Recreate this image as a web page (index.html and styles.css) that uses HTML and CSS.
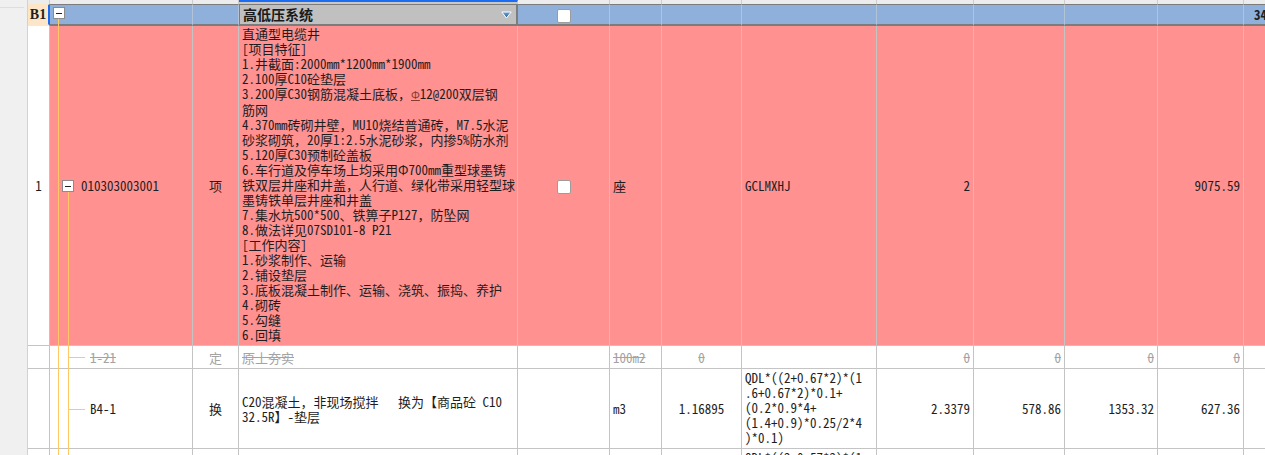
FILE: index.html
```html
<!DOCTYPE html>
<html lang="zh-CN">
<head>
<meta charset="utf-8">
<title>清单</title>
<link rel="stylesheet" href="styles.css">
</head>
<body>
<div class="wrap">
  <div class="gutter"><div class="gutter-head"></div></div>
  <table class="grid">
    <colgroup>
      <col class="c-no"><col class="c-code"><col class="c-type"><col class="c-name"><col class="c-chk"><col class="c-unit"><col class="c-qty"><col class="c-expr"><col class="c-n1"><col class="c-n2"><col class="c-n3"><col class="c-n4"><col class="c-n5">
    </colgroup>
    <tr class="r-head">
      <td></td><td></td><td></td><td class="head-sel"></td><td></td><td></td><td></td><td></td><td></td><td></td><td></td><td></td><td></td>
    </tr>
    <tr class="r-b1">
      <td class="no-b1">B1</td>
      <td class="code code-b1"><span class="box"></span><span class="ta ta-b1"></span></td>
      <td></td>
      <td class="name-b1"><div class="combo"><span>高低压系统</span><svg class="drop" width="11" height="8" viewBox="0 0 11 8"><defs><linearGradient id="g" x1="0" y1="0" x2="0" y2="1"><stop offset="0" stop-color="#6fa6d8"/><stop offset="1" stop-color="#1d5a96"/></linearGradient></defs><polygon points="0.8,1 10.2,1 5.5,7" fill="url(#g)" stroke="#fff" stroke-width="1"/></svg></div></td>
      <td class="chk"><span class="cb"></span></td>
      <td></td><td></td><td></td><td></td><td></td><td></td><td></td>
      <td class="total">34176.52</td>
    </tr>
    <tr class="r-1">
      <td class="no">1</td>
      <td class="code code-1"><span class="ta"></span><span class="tb tb-1"></span><span class="box box-1"></span>010303003001</td>
      <td class="ctr">项</td>
      <td class="desc">直通型电缆井<br>[项目特征]<br>1.井截面:2000mm*1200mm*1900mm<br>2.100厚C10砼垫层<br>3.200厚C30钢筋混凝土底板，<span class="rebar">Φ</span>12@200双层钢<br>筋网<br>4.370mm砖砌井壁，MU10烧结普通砖，M7.5水泥<br>砂浆砌筑，20厚1:2.5水泥砂浆，内掺5%防水剂<br>5.120厚C30预制砼盖板<br>6.车行道及停车场上均采用Φ700mm重型球墨铸<br>铁双层井座和井盖，人行道、绿化带采用轻型球<br>墨铸铁单层井座和井盖<br>7.集水坑500*500、铁箅子P127，防坠网<br>8.做法详见07SD101-8 P21<br>[工作内容]<br>1.砂浆制作、运输<br>2.铺设垫层<br>3.底板混凝土制作、运输、浇筑、振捣、养护<br>4.砌砖<br>5.勾缝<br>6.回填</td>
      <td class="chk"><span class="cb"></span></td>
      <td class="txt">座</td>
      <td class="ctr"></td>
      <td class="txt">GCLMXHJ</td>
      <td class="num">2</td>
      <td class="num"></td>
      <td class="num"></td>
      <td class="num">9075.59</td>
      <td></td>
    </tr>
    <tr class="r-del">
      <td class="no"></td>
      <td class="code code-sub"><span class="ta"></span><span class="tb"></span><span class="th"></span><s>1-21</s></td>
      <td class="ctr">定</td>
      <td class="txt"><s>原土夯实</s></td>
      <td></td>
      <td class="txt"><s>100m2</s></td>
      <td class="ctr"><s>0</s></td>
      <td></td>
      <td class="num"><s>0</s></td>
      <td class="num"><s>0</s></td>
      <td class="num"><s>0</s></td>
      <td class="num"><s>0</s></td>
      <td></td>
    </tr>
    <tr class="r-sub">
      <td class="no"></td>
      <td class="code code-sub"><span class="ta"></span><span class="tb"></span><span class="th"></span>B4-1</td>
      <td class="ctr">换</td>
      <td class="txt">C20混凝土，非现场搅拌&nbsp;&nbsp;&nbsp;换为【商品砼 C10<br>32.5R】-垫层</td>
      <td></td>
      <td class="txt">m3</td>
      <td class="ctr">1.16895</td>
      <td class="txt expr">QDL*((2+0.67*2)*(1<br>.6+0.67*2)*0.1+<br>(0.2*0.9*4+<br>(1.4+0.9)*0.25/2*4<br>)*0.1)</td>
      <td class="num">2.3379</td>
      <td class="num">578.86</td>
      <td class="num">1353.32</td>
      <td class="num">627.36</td>
      <td></td>
    </tr>
    <tr class="r-sub">
      <td class="no"></td>
      <td class="code code-sub"><span class="ta"></span><span class="tb"></span></td>
      <td class="ctr"></td>
      <td class="txt"></td>
      <td></td>
      <td class="txt"></td>
      <td class="ctr"></td>
      <td class="txt expr">QDL*((2+0.57*2)*(1<br>.6+0.57*2)*0.1+<br>(0.2*0.9*4+<br>(1.4+0.9)*0.25/2*4<br>)*0.1)</td>
      <td class="num"></td>
      <td class="num"></td>
      <td class="num"></td>
      <td class="num"></td>
      <td></td>
    </tr>
  </table>
</div>
</body>
</html>
```

FILE: styles.css
```css
html, body {
  margin: 0;
  padding: 0;
}
body {
  width: 1265px;
  height: 455px;
  overflow: hidden;
  background: #f0f0f0;
  color: #1e1e1e;
  font-family: "Noto Sans Mono CJK SC", "Liberation Mono", "Noto Sans CJK SC", monospace;
  font-size: 13px;
  line-height: 15px;
}
.wrap {
  display: flex;
  align-items: flex-start;
}
.gutter {
  flex: none;
  width: 28px;
  height: 455px;
  box-sizing: border-box;
  border-right: 1px solid #d2d2d2;
  background: #f0f0f0;
}
.gutter-head {
  height: 7px;
  margin-right: 3px;
  border-bottom: 1px solid #dddddd;
}
.grid {
  flex: none;
  table-layout: fixed;
  border-collapse: separate;
  border-spacing: 0;
  width: 1286px;
  background: #ffffff;
}
.c-no { width: 22px; }
.c-code { width: 143px; }
.c-type { width: 46px; }
.c-name { width: 279px; }
.c-chk { width: 92px; }
.c-unit { width: 52px; }
.c-qty { width: 80px; }
.c-expr { width: 135px; }
.c-n1 { width: 97px; }
.c-n2 { width: 91px; }
.c-n3 { width: 93px; }
.c-n4 { width: 86px; }
.c-n5 { width: 70px; }

td {
  box-sizing: border-box;
  padding: 0 2px;
  border-right: 1px solid #c4c4c4;
  border-bottom: 1px solid #c4c4c4;
  vertical-align: middle;
  white-space: nowrap;
}

/* header strip */
.r-head td {
  height: 4px;
  padding: 0;
  font-size: 0;
  line-height: 0;
  background: #ececec;
  border-right-color: #cdcdcd;
  border-bottom: none;
}
.r-head td.head-sel {
  border-top: 2px solid #1a6cf0;
  background: #c9c9c9;
}

/* B1 group row */
.r-b1 td {
  height: 22px;
  background: #8fb0db;
  border-top: 1px solid #7c7c7c;
  border-bottom: 2px solid #7c7c7c;
  border-right-color: #b4c4d8;
}
.r-b1 td.no-b1 {
  background: #fde6c8;
  border-top-color: #fde6c8;
  border-bottom-color: #fde6c8;
  border-right: 2px solid #1a6cf0;
  padding: 0;
  text-align: center;
  font-family: "Liberation Serif", serif;
  font-weight: bold;
  font-size: 14px;
}
.r-b1 td.code-b1 {
  vertical-align: top;
  padding: 2px 0 0 3px;
}
.r-b1 td.name-b1 {
  background: #c0c0c0;
  border-left: 1px solid #7c7c7c;
  border-right: 2px solid #7c7c7c;
  padding: 0 4px 0 3px;
}
.combo {
  display: flex;
  align-items: center;
  justify-content: space-between;
  font-family: "Noto Sans CJK SC", sans-serif;
  font-weight: bold;
  font-size: 14px;
  color: #1a1a1a;
}
.drop {
  display: block;
}
.r-b1 td.total {
  font-weight: bold;
  padding-left: 10px;
}

/* main item row */
.r-1 td {
  height: 320px;
  background: #ff9191;
}
.r-1 td.no {
  background: #ffffff;
}
.r-del td {
  height: 23px;
  color: #a3a3a3;
}
.r-sub td {
  height: 80px;
}
td.expr {
  vertical-align: top;
  padding-top: 1px;
}
td.no {
  text-align: center;
  padding: 0;
}
td.ctr { text-align: center; }
td.num {
  text-align: right;
  padding-right: 3px;
}
td.txt {
  overflow: hidden;
  padding-left: 3px;
}
td.desc {
  vertical-align: top;
  padding: 0 0 0 3px;
}
s {
  text-decoration: line-through;
}
.rebar {
  color: #8a3b2e;
  font-size: 11px;
  text-decoration: underline;
}

/* checkbox */
td.chk { text-align: center; }
.cb {
  display: inline-block;
  vertical-align: middle;
  width: 14px;
  height: 14px;
  box-sizing: border-box;
  border: 1px solid #9c9c9c;
  border-radius: 2px;
  background: #ffffff;
}

/* tree column */
td.code {
  position: relative;
}
.box {
  display: block;
  position: relative;
  width: 12px;
  height: 12px;
  box-sizing: border-box;
  border: 1px solid #8c8c8c;
  background: #ffffff;
}
.box::after {
  content: "";
  position: absolute;
  left: 2px;
  right: 2px;
  top: 5px;
  height: 1px;
  background: #222222;
}
td.code-1 {
  padding-left: 12px;
}
.box-1 {
  display: inline-block;
  vertical-align: middle;
  margin: -2px 7px 0 0;
}
td.code-sub {
  padding-left: 40px;
}
.ta, .tb, .th {
  position: absolute;
  background: #ffc866;
}
.ta {
  left: 8px;
  width: 1px;
  top: 0;
  bottom: -1px;
}
.ta-b1 {
  top: 14px;
  bottom: -2px;
}
.tb {
  left: 18px;
  width: 1px;
  top: 0;
  bottom: -1px;
}
.tb-1 {
  top: calc(50% + 6px);
}
.th {
  left: 18px;
  width: 17px;
  height: 1px;
  top: 50%;
}
```
